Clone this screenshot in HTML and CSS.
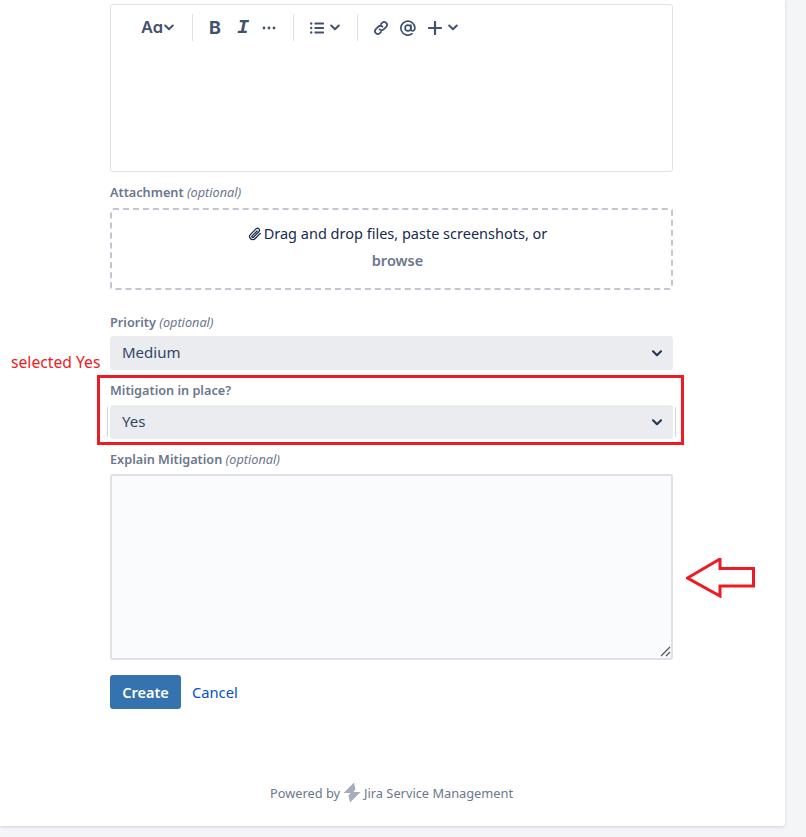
FILE: index.html
```html
<!DOCTYPE html>
<html lang="en">
<head>
<meta charset="utf-8">
<title>Create request</title>
<link rel="stylesheet" href="styles.css">
</head>
<body>
<main class="card">
  <form class="form">
    <div class="editor">
      <div class="toolbar">
        <div class="tgroup tg-text"><span class="aa">Aa</span><svg class="chev" width="10" height="7" viewBox="0 0 10 7"><path d="M1.2 1.5 5 5.2l3.8-3.7" /></svg></div>
        <div class="tgroup tg-format">
          <span class="bold">B</span>
          <span class="ital">I</span>
          <svg width="14" height="4" viewBox="0 0 14 4" class="more"><circle cx="2" cy="2" r="1.4"/><circle cx="7" cy="2" r="1.4"/><circle cx="12" cy="2" r="1.4"/></svg>
        </div>
        <div class="tgroup tg-list">
          <svg class="list" width="14" height="12" viewBox="0 0 14 12"><circle cx="1.2" cy="1.5" r="1.2"/><circle cx="1.2" cy="6" r="1.2"/><circle cx="1.2" cy="10.5" r="1.2"/><rect x="4.5" y=".5" width="9.5" height="2" rx=".6"/><rect x="4.5" y="5" width="9.5" height="2" rx=".6"/><rect x="4.5" y="9.5" width="9.5" height="2" rx=".6"/></svg>
          <svg class="chev" width="10" height="7" viewBox="0 0 10 7"><path d="M1.2 1.5 5 5.2l3.8-3.7"/></svg>
        </div>
        <div class="tgroup tg-insert">
          <svg class="link" width="16" height="16" viewBox="0 0 16 16"><path d="M6.6 9.4a2.8 2.8 0 0 0 4 0l2.6-2.6a2.83 2.83 0 0 0-4-4L8 4.1"/><path d="M9.4 6.6a2.8 2.8 0 0 0-4 0L2.8 9.2a2.83 2.83 0 0 0 4 4L8 11.9"/></svg>
          <svg class="at" width="16" height="16" viewBox="0 0 16 16"><circle cx="8" cy="8" r="2.9"/><path d="M10.9 5.2v4.2c0 2.2 3.9 2.2 4-1.4A7 7 0 1 0 12 13.8"/></svg>
          <svg class="plus" width="14" height="14" viewBox="0 0 14 14"><path d="M7 1v12M1 7h12"/></svg>
          <svg class="chev" width="10" height="7" viewBox="0 0 10 7"><path d="M1.2 1.5 5 5.2l3.8-3.7"/></svg>
        </div>
      </div>
    </div>

    <div class="field field-attach">
      <div class="label">Attachment <em>(optional)</em></div>
      <div class="drop">
        <div class="drop-line"><svg class="clip" width="14" height="14" viewBox="0 0 14 14"><path d="M12.3 6.4 7 11.8a3.1 3.1 0 0 1-4.4-4.4L8 1.9a2 2 0 0 1 2.9 2.9l-5.4 5.4a.9.9 0 0 1-1.3-1.3l4.9-4.9"/></svg>Drag and drop files, paste screenshots, or</div>
        <div class="browse">browse</div>
      </div>
    </div>

    <div class="field field-priority">
      <div class="label">Priority <em>(optional)</em></div>
      <div class="select"><span>Medium</span><svg class="sel-chev" width="10" height="7" viewBox="0 0 10 7"><path d="M1 1.3 5 5.2l4-3.9"/></svg></div>
    </div>

    <div class="field field-mitigation">
      <div class="label">Mitigation in place?</div>
      <div class="select focused"><span>Yes</span><svg class="sel-chev" width="10" height="7" viewBox="0 0 10 7"><path d="M1 1.3 5 5.2l4-3.9"/></svg></div>
    </div>

    <div class="field field-explain">
      <div class="label">Explain Mitigation <em>(optional)</em></div>
      <div class="textarea"><svg class="grip" width="11" height="11" viewBox="0 0 11 11"><path d="M1 10 10 1M6 10l4-4"/></svg></div>
    </div>

    <div class="actions">
      <button type="button" class="btn">Create</button>
      <a class="cancel" href="#">Cancel</a>
    </div>
  </form>

  <footer class="powered">Powered by
    <svg class="bolt" width="18" height="21" viewBox="0 0 18 21"><path d="M11 .5 .5 11H9.5L12.5 7.5ZM7 20.5 17.5 10H8.5L5.5 13.5Z"/></svg>
    Jira Service Management</footer>
</main>

<div class="note">selected Yes</div>
<div class="highlight"></div>
<svg class="arrow" width="70" height="40" viewBox="0 0 70 40"><path d="M1.5 20 34 1V10.5H67.5V28H34V38Z"/></svg>
</body>
</html>
```
FILE: styles.css
```css
* { box-sizing: border-box; }
html, body { margin: 0; height: 837px; overflow: hidden; }
body {
  position: relative;
  background: #f4f5f7;
  font-family: "Noto Sans", "Open Sans", sans-serif;
  font-size: 14px;
  color: #172b4d;
}
.card {
  width: 785px;
  height: 826px;
  background: #fff;
  border-radius: 0 0 3px 0;
  box-shadow: 0 1px 3px rgba(9, 30, 66, .16);
  padding: 4px 112px 0 110px;
  display: flex;
  flex-direction: column;
}
.form { display: flex; flex-direction: column; }

.editor {
  height: 168px;
  border: 1px solid #dfe1e6;
  border-radius: 3px;
}
.toolbar {
  display: flex;
  align-items: center;
  height: 27px;
  margin-top: 9px;
  padding-left: 30px;
  color: #42526e;
}
.toolbar svg { display: block; }
.tgroup { display: flex; align-items: center; height: 27px; }
.tgroup + .tgroup { border-left: 1px solid #dfe1e6; }
.tg-text { width: 51px; gap: 1px; }
.tg-format { width: 101px; padding-left: 16px; }
.tg-list { width: 64px; padding-left: 16px; gap: 6px; }
.tg-insert { padding-left: 15px; }
.aa { font-family: Inter, sans-serif; font-feature-settings: "cv11"; font-weight: 600; font-size: 16.5px; line-height: 1; }
.bold { font-family: Inter, sans-serif; font-weight: 700; font-size: 18px; line-height: 1; width: 28px; }
.ital { font-family: "Liberation Mono", monospace; font-weight: 700; font-style: italic; font-size: 20px; line-height: 1; width: 25px; margin-left: 0; margin-right: 0; }
.more { fill: #42526e; }
.list { fill: #42526e; }
.chev { fill: none; stroke: #42526e; stroke-width: 2; stroke-linecap: round; stroke-linejoin: round; }
.link, .at, .plus { fill: none; stroke: #42526e; }
.link { stroke-width: 1.8; stroke-linecap: round; }
.at { stroke-width: 1.7; stroke-linecap: round; margin-left: 11px; }
.plus { stroke-width: 2.2; stroke-linecap: round; margin-left: 12px; margin-right: 6px; }

.field { display: flex; flex-direction: column; }
.label {
  font-size: 12.7px;
  font-weight: 600;
  line-height: 16px;
  color: #6b778c;
}
.label em { font-weight: 400; }
.field-attach { margin-top: 12px; }
.field-attach .label { margin-bottom: 8px; }
.drop {
  height: 82px;
  border: 2px dashed #c1c7d0;
  border-radius: 3px;
  text-align: center;
  padding: 10px 0 0 12px;
  line-height: 27px;
}
.drop-line { display: flex; justify-content: center; align-items: center; gap: 2px; height: 27px; font-size: 14.5px; }
.clip { fill: none; stroke: #172b4d; stroke-width: 1.3; stroke-linecap: round; }
.browse { font-weight: 600; color: #6b778c; font-size: 14.5px; }
.field-priority { margin-top: 24px; }
.field-priority .label { margin-bottom: 6px; }
.select {
  position: relative;
  height: 34px;
  background: #ebecf0;
  border-radius: 3px;
  padding: 0 11px 2px 12px;
  font-size: 15px;
  display: flex;
  align-items: center;
  justify-content: space-between;
  color: #344563;
}
.focused::before, .focused::after {
  content: "";
  position: absolute;
  top: 2px;
  bottom: 2px;
  width: 1px;
  background: #c9d9f0;
}
.focused::before { left: -3px; }
.focused::after { right: -3px; }
.sel-chev { fill: none; stroke: #253858; stroke-width: 2.2; stroke-linecap: round; stroke-linejoin: round; position: relative; top: 1px; }
.field-mitigation { margin-top: 12px; }
.field-mitigation .label { margin-bottom: 7px; }
.field-explain { margin-top: 12px; }
.field-explain .label { margin-bottom: 7px; }
.textarea {
  position: relative;
  height: 186px;
  background: #fafbfc;
  border: 2px solid #dfe1e6;
  border-radius: 3px;
}
.grip { position: absolute; right: 0; bottom: 1px; fill: none; stroke: #555; stroke-width: 1.2; }
.actions { display: flex; align-items: center; margin-top: 15px; gap: 11px; }
.btn {
  height: 34px;
  width: 71px;
  padding: 0;
  border: 0;
  border-radius: 3px;
  background: #3572b0;
  color: #fff;
  font: 600 14.5px "Noto Sans", "Open Sans", sans-serif;
}
.cancel { color: #0052cc; text-decoration: none; font-size: 14.7px; }
.powered {
  margin-top: 73px;
  display: flex;
  align-items: center;
  justify-content: center;
  gap: 3px;
  font-size: 12.8px;
  color: #6b778c;
  height: 21px;
}
.bolt { fill: #a5adba; }

.note {
  position: absolute;
  left: 11px;
  top: 352px;
  font-size: 15.7px;
  line-height: 20px;
  color: #ed1c24;
}
.highlight {
  position: absolute;
  left: 97px;
  top: 375px;
  width: 587px;
  height: 70px;
  border: 3px solid #ed1c24;
}
.arrow {
  position: absolute;
  left: 686px;
  top: 558px;
  fill: none;
  stroke: #ed1c24;
  stroke-width: 3;
}
```
